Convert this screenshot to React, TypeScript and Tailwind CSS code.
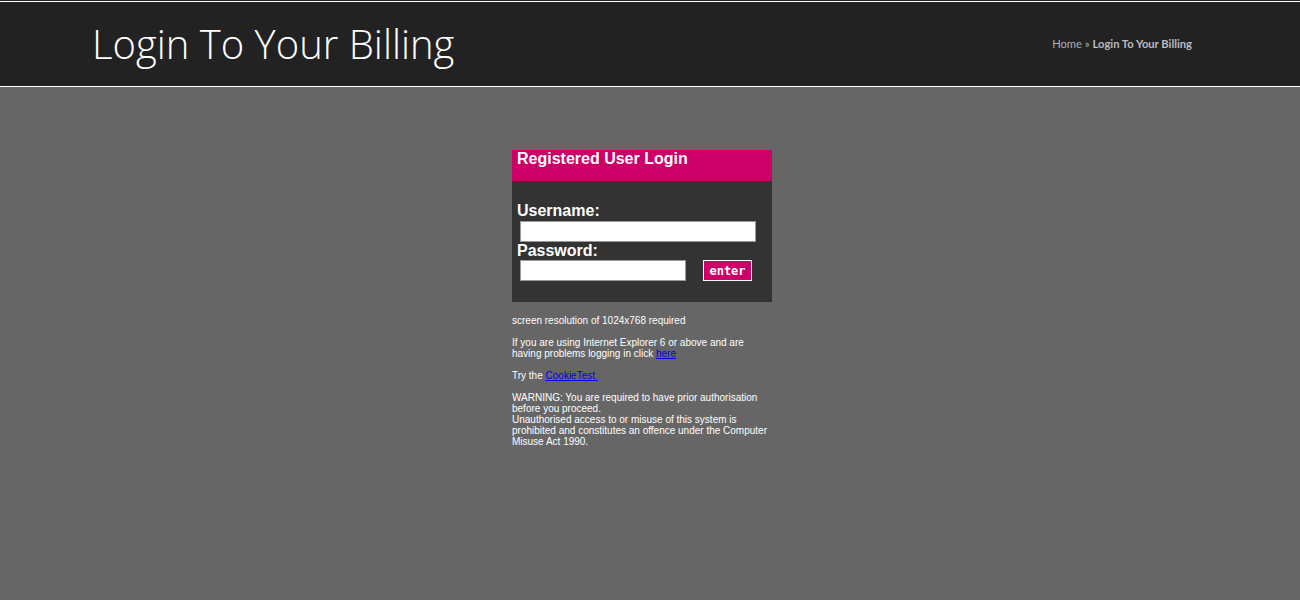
export default function App() {
  return (
    <div className="min-h-[600px] bg-[#666666]" style={{ fontFamily: "Arial, 'Liberation Sans', sans-serif" }}>
      <div className="bg-[#222222] pt-px">
        <div className="flex h-[86px] items-center justify-between border-y border-white pl-[92px] pr-[108px]">
          <h1 className="text-[40px] font-light leading-none text-white" style={{ fontFamily: "'Open Sans', sans-serif" }}>
            Login To Your Billing
          </h1>
          <div className="text-[11.2px] text-[#a8aeb5]" style={{ fontFamily: "Lato, sans-serif" }}>
            Home » <span className="font-bold text-[#b8bcc0]">Login To Your Billing</span>
          </div>
        </div>
      </div>

      <div className="ml-[512px] mt-[63px] w-[260px]">
        <div className="h-[31px] bg-[#cc0066] pl-[5px] text-[16px] font-bold leading-[18px] text-white">
          Registered User Login
        </div>
        <div className="bg-[#333333] pb-[21px] pt-[20px] text-white">
          <div className="pl-[5px] text-[16px] font-bold leading-[20px]">Username:</div>
          <input className="ml-[8px] block h-[21px] w-[236px] border border-[#999] bg-white" />
          <div className="pl-[5px] text-[16px] font-bold leading-[18px]">Password:</div>
          <div className="flex items-center">
            <input type="password" className="ml-[8px] block h-[21px] w-[166px] border border-[#999] bg-white" />
            <button
              className="ml-[17px] flex h-[21px] w-[49px] items-center justify-center border border-white bg-[#cc0066] text-[12px] font-semibold text-white"
              style={{ fontFamily: "'DejaVu Sans Mono', monospace" }}
            >
              enter
            </button>
          </div>
        </div>
        <div className="mt-[13px] text-[10px] leading-[11px] text-white">
          screen resolution of 1024x768 required
          <br />
          <br />
          If you are using Internet Explorer 6 or above and are
          <br />
          having problems logging in click <a href="#" className="text-[#0000ee] underline">here</a>
          <br />
          <br />
          Try the <a href="#" className="text-[#0000ee] underline">CookieTest&nbsp;</a>
          <br />
          <br />
          WARNING: You are required to have prior authorisation
          <br />
          before you proceed.
          <br />
          Unauthorised access to or misuse of this system is
          <br />
          prohibited and constitutes an offence under the Computer
          <br />
          Misuse Act 1990.
        </div>
      </div>
    </div>
  );
}
